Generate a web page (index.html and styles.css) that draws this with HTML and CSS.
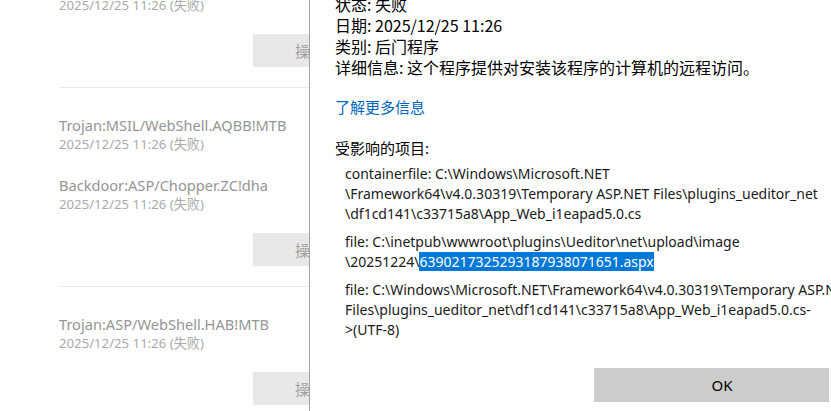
FILE: index.html
```html
<!DOCTYPE html>
<html lang="zh-CN">
<head>
<meta charset="utf-8">
<title>保护历史记录</title>
<link rel="stylesheet" href="styles.css">
</head>
<body>
<div class="screen">
  <div class="list">
    <div class="group group-first">
      <div class="entry">
        <div class="name">Backdoor:ASP/Chopper.ZC!dha</div>
        <div class="date">2025/12/25 11:26 (失败)</div>
      </div>
      <div class="actions"><button class="op">操作</button></div>
    </div>
    <div class="group">
      <div class="entry">
        <div class="name">Trojan:MSIL/WebShell.AQBB!MTB</div>
        <div class="date">2025/12/25 11:26 (失败)</div>
      </div>
      <div class="entry">
        <div class="name">Backdoor:ASP/Chopper.ZC!dha</div>
        <div class="date">2025/12/25 11:26 (失败)</div>
      </div>
      <div class="actions"><button class="op">操作</button></div>
    </div>
    <div class="group">
      <div class="entry">
        <div class="name">Trojan:ASP/WebShell.HAB!MTB</div>
        <div class="date">2025/12/25 11:26 (失败)</div>
      </div>
      <div class="actions"><button class="op">操作</button></div>
    </div>
  </div>

  <div class="dialog">
    <div class="content">
      <div class="facts">
        <div>状态: 失败</div>
        <div>日期: 2025/12/25 11:26</div>
        <div>类别: 后门程序</div>
        <div>详细信息: 这个程序提供对安装该程序的计算机的远程访问。</div>
      </div>
      <a class="more" href="#">了解更多信息</a>
      <div class="affected-title">受影响的项目:</div>
      <div class="items">
        <div class="item">containerfile: C:\Windows\Microsoft.NET<br>\Framework64\v4.0.30319\Temporary ASP.NET Files\plugins_ueditor_net<br>\df1cd141\c33715a8\App_Web_i1eapad5.0.cs</div>
        <div class="item">file: C:\inetpub\wwwroot\plugins\Ueditor\net\upload\image<br>\20251224\<span class="sel">6390217325293187938071651.aspx</span></div>
        <div class="item">file: C:\Windows\Microsoft.NET\Framework64\v4.0.30319\Temporary ASP.NET<br>Files\plugins_ueditor_net\df1cd141\c33715a8\App_Web_i1eapad5.0.cs-<br>&gt;(UTF-8)</div>
      </div>
    </div>
    <div class="footer">
      <button class="ok">OK</button>
    </div>
  </div>
</div>
</body>
</html>
```

FILE: styles.css
```css
* { box-sizing: border-box; }

html, body {
  margin: 0;
  padding: 0;
  background: #ffffff;
}

body {
  font-family: "Noto Sans", "Noto Sans CJK SC", sans-serif;
  color: #1a1a1a;
}

.screen {
  position: relative;
  width: 831px;
  height: 411px;
  overflow: hidden;
  background: #ffffff;
}

/* ---------- left list (background page) ---------- */
.list {
  margin-top: -24px;
  padding-left: 59px;
}

.group {
  padding: 27px 0 20px;
  border-bottom: 1px solid #e8e8e8;
}

.group-first {
  padding-top: 0;
}

.entry + .entry {
  margin-top: 22px;
}

.name {
  font-size: 14.6px;
  line-height: 20px;
  color: #959595;
  white-space: nowrap;
}

.date {
  font-size: 13.2px;
  line-height: 18px;
  color: #ababab;
  white-space: nowrap;
}

.actions {
  margin-top: 20px;
  padding-left: 194px;
}

.op {
  display: block;
  width: 114px;
  height: 33px;
  border: 0;
  margin: 0;
  background: #e8e8e8;
  color: #a0a0a0;
  font-family: "Noto Sans CJK SC", sans-serif;
  font-size: 15px;
  padding: 0;
}

/* ---------- dialog overlay ---------- */
.dialog {
  position: absolute;
  top: 0;
  left: 309px;
  right: 0;
  bottom: 0;
  background: #ffffff;
  border-left: 1px solid #a3a3a3;
  display: flex;
  flex-direction: column;
  overflow: hidden;
}

.content {
  margin-top: -6px;
  padding-left: 25px;
}

.facts {
  font-family: "Noto Sans CJK SC", sans-serif;
  font-size: 16px;
  line-height: 21px;
  color: #000000;
  white-space: nowrap;
}

.more {
  display: block;
  margin-top: 19px;
  font-size: 15px;
  line-height: 21px;
  color: #0067c0;
  text-decoration: none;
}

.affected-title {
  margin-top: 20px;
  font-size: 15px;
  line-height: 21px;
  color: #000000;
}

.items {
  margin-top: 5px;
  padding-left: 10px;
  font-size: 14px;
  line-height: 20px;
  color: #1a1a1a;
  white-space: nowrap;
}

.item + .item {
  margin-top: 8px;
}

.sel {
  background: #0078d7;
  color: #ffffff;
}

.footer {
  margin-top: auto;
  display: flex;
  justify-content: flex-end;
  padding: 0 2px 9px 0;
}

.ok {
  width: 235px;
  height: 34px;
  border: 0;
  margin: 0;
  padding: 0 0 0 21px;
  background: #cccccc;
  color: #000000;
  font-family: "Noto Sans", sans-serif;
  font-size: 15px;
}
```
